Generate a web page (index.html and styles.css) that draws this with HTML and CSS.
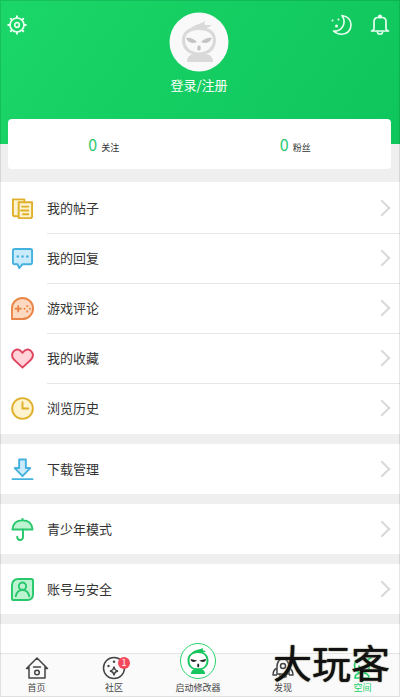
FILE: index.html
```html
<!DOCTYPE html>
<html lang="zh-CN">
<head>
<meta charset="utf-8">
<meta name="viewport" content="width=device-width, initial-scale=1">
<title>空间</title>
<link rel="stylesheet" href="styles.css">
</head>
<body>
<header class="hero">
  <div class="hero-bar">
    <button class="icon-btn" aria-label="设置">
      <svg width="20" height="20" viewBox="0 0 20 20" fill="none" stroke="currentColor" stroke-width="1.7" stroke-linecap="round"><circle cx="10" cy="10" r="7"/><circle cx="10" cy="10" r="2.3"/><path stroke-width="2" d="M10 1.2v1.3M10 17.5v1.3M1.2 10h1.3M17.5 10h1.3M3.8 3.8l.8.8M15.4 15.4l.8.8M3.8 16.2l.8-.8M15.4 4.6l.8-.8"/></svg>
    </button>
    <a class="profile" href="#login">
      <svg class="avatar" width="60" height="60" viewBox="0 0 60 60"><circle cx="30" cy="30" r="29.5" fill="#f9f9f9"/><g fill="#d9d9d9"><path d="M19 19C23 13 31 12 37 9C35 11 35 13 37 13L43 13C38 17 34 17 29 17C25 17 22 18 19 19Z"/><path fill-rule="evenodd" d="M30 15C41 15 47 20 47 28C47 37 41 43 30 43C19 43 13 37 13 28C13 20 19 15 30 15ZM30 18C21 18 16 22 16 28C16 35 22 40.500 30 40.500C38 40.500 44 35 44 28C44 22 39 18 30 18Z"/><path d="M18 50C18 45 21 42 25 42H36C41 42 44 45 44 50Z"/></g><g fill="#c4c4c4"><path d="M17 26C21 25 25 27 28 30C24 32 19 31 17 26ZM43 26C39 25 35 27 32 30C36 32 41 31 43 26Z"/><ellipse cx="30" cy="36" rx="1.800" ry="2.800"/></g></svg>
      <span>登录/注册</span>
    </a>
    <div class="hero-actions">
      <button class="icon-btn" aria-label="夜间模式">
        <svg width="22" height="22" viewBox="0 0 22 22" fill="none" stroke="currentColor" stroke-width="1.6" stroke-linejoin="round"><path d="M12 1.5C18 2.500 21 6 21 11C21 16.500 17 20.200 12 20.200C8 20.200 5 18.500 3.500 17C12 18 17 9 12 1.500Z"/><g fill="currentColor" stroke="none"><circle cx="2.500" cy="6.500" r="1"/><circle cx="8.500" cy="5.500" r="1"/><circle cx="6.500" cy="12" r="1.500"/></g></svg>
      </button>
      <button class="icon-btn" aria-label="通知">
        <svg width="20" height="22" viewBox="0 0 20 22" fill="none" stroke="currentColor" stroke-width="1.700" stroke-linecap="round" stroke-linejoin="round"><path d="M4 15V7.500C4 5 5.500 3.500 8 3.500H12C14.500 3.500 16 5 16 7.500V15M1.500 17H18.500M4 15L2 17M16 15L18 17M7.500 18.500C8 20.800 12 20.800 12.500 18.500"/><circle cx="10" cy="2.500" r="1.200" fill="currentColor"/></svg>
      </button>
    </div>
  </div>
</header>
<section class="stats">
  <a href="#following"><b>0</b><span>关注</span></a>
  <a href="#fans"><b>0</b><span>粉丝</span></a>
</section>
<main class="menu">
  <ul class="group group-multi">
    <li><a class="row" href="#posts"><svg class="ico yellow" viewBox="0 0 24 24"><path d="M2 2.500H14V20H4Q2 20 2 18Z"/><path d="M8 5.500H22V20Q22 22 20 22H8Z"/><path class="line" d="M11.500 10H18M10.500 14H18M12.500 18H18"/></svg><span>我的帖子</span></a></li>
    <li><a class="row" href="#replies"><svg class="ico blue" viewBox="0 0 24 24"><path d="M4 2H20Q22 2 22 4V16Q22 18 20 18H12L8.500 22L7 18H4Q2 18 2 16V4Q2 2 4 2Z"/><path class="line dots" d="M7 10H7.100M12 10H12.100M17 10H17.100"/></svg><span>我的回复</span></a></li>
    <li><a class="row" href="#reviews"><svg class="ico orange" viewBox="0 0 24 24"><path d="M1 23V12A11 11 0 1 1 12 23Z"/><path class="line" d="M7.500 9.500V15M4.800 12.200H10.200"/><g fill="#e98647" stroke="none"><circle cx="17" cy="9.500" r="1.100"/><circle cx="17" cy="15" r="1.100"/><circle cx="14.200" cy="12.200" r="1.100"/><circle cx="19.800" cy="12.200" r="1.100"/></g></svg><span>游戏评论</span></a></li>
    <li><a class="row" href="#favorites"><svg class="ico red" viewBox="0 0 24 24"><path d="M12 21.500L3 13C-2 7 5-.500 10 4L12 6L14 4C19-.500 26 7 21 13Z"/></svg><span>我的收藏</span></a></li>
    <li><a class="row" href="#history"><svg class="ico yellow" viewBox="0 0 24 24"><circle cx="12" cy="12" r="10.800"/><path class="line" d="M12 5.500V12H18"/></svg><span>浏览历史</span></a></li>
  </ul>
  <ul class="group"><li><a class="row" href="#downloads"><svg class="ico blue" viewBox="0 0 24 24"><path d="M8.500 1.500H15.500V10.500H20L12 19L4 10.500H8.500Z"/><path class="line" d="M1.500 22H22.500"/></svg><span>下载管理</span></a></li></ul>
  <ul class="group"><li><a class="row" href="#teen"><svg class="ico green" viewBox="0 0 24 24"><path d="M1.500 12C2 6 6 2.500 12 2.500S22 6 22.500 12Z"/><path class="line" d="M12 .800V2M12.500 12V20C12.500 24 6.500 24 6.500 19.500"/></svg><span>青少年模式</span></a></li></ul>
  <ul class="group"><li><a class="row" href="#account"><svg class="ico green" viewBox="0 0 24 24"><path d="M8 1H21Q23 1 23 3V17Q23 23 17 23H3Q1 23 1 21V8Q1 1 8 1Z"/><circle cx="12" cy="8.500" r="3.800"/><path class="line" d="M5 19C6 14 8.500 12.500 12 12.500S18 14 19 19"/></svg><span>账号与安全</span></a></li></ul>
  <div class="group rest"></div>
</main>
<nav class="tabs">
  <a href="#home"><svg width="24" height="24" viewBox="0 0 24 24" fill="none" stroke="currentColor" stroke-width="1.500" stroke-linecap="round" stroke-linejoin="round"><path d="M2 12L12 2L22 12M4 11V22H20V11M8.500 11H15.500M1.500 12.500H4M20 12.500H22.500"/><circle cx="12" cy="16.500" r="2.300"/></svg><span>首页</span></a>
  <a href="#community"><svg width="24" height="24" viewBox="0 0 24 24" fill="none" stroke="currentColor" stroke-width="1.500"><circle cx="12" cy="12" r="10.500"/><path d="M12 10.500Q12.500 14.500 16 15Q12.500 15.500 12 19.500Q11.500 15.500 8 15Q11.500 14.500 12 10.500Z"/><g fill="currentColor" stroke="none"><circle cx="6.500" cy="10" r="1.200"/><circle cx="12" cy="5.800" r="1.200"/></g></svg><i class="badge">1</i><span>社区</span></a>
  <a class="launch" href="#launch"><svg width="38" height="38" viewBox="0 0 38 38"><circle cx="19" cy="19" r="17.500" fill="#fff" stroke="#27d36b"/><g fill="#18c65f"><path d="M12 12C14 8 19 8 24 6C23 8 24 9 27 9C25 11 22 11 19 11C16 11 14 11 12 12Z"/><path fill-rule="evenodd" d="M19 9.500C26 9.500 29.500 13 29.500 18.500S26 28 19 28S8.500 24 8.500 18.500S12 9.500 19 9.500ZM19 11C13 11 10.500 14 10.500 18.500S13 26.500 19 26.500S27.500 23 27.500 18.500S25 11 19 11Z"/><path d="M12 32C12 28 15 26.500 19 26.500S26 28 26 32Z"/></g><g fill="#202422"><path d="M11.500 17L18 18.500C15 21 12 20 11.500 17ZM27 17L20.500 18.500C23 21 27 20 27 17Z"/><ellipse cx="19.200" cy="23.500" rx="1" ry="1.900"/></g></svg><span>启动修改器</span></a>
  <a href="#discover"><svg width="24" height="24" viewBox="0 0 24 24" fill="none" stroke="currentColor" stroke-width="1.500" stroke-linejoin="round"><path d="M6 18V11C6 6 9 3 12 2C15 3 18 6 18 11V18ZM6 12Q2 14 2 19H6M18 12Q22 14 22 19H18M9 18V21H15V18"/><circle cx="12" cy="10" r="2.500"/></svg><i class="badge dot"></i><span>发现</span></a>
  <a class="active" href="#space" aria-current="page"><svg width="24" height="24" viewBox="0 0 24 24" fill="none" stroke="currentColor" stroke-width="1.700" stroke-linecap="round"><circle cx="11" cy="9.500" r="7.500"/><path d="M8 10C9 13 13 13 14 10M4 22C4 18 7 17 11 17S18 18 18 22ZM16 4L20 2"/></svg><span>空间</span></a>
  <strong class="mark">大玩客</strong>
</nav>
</body>
</html>
```
FILE: styles.css
```css
* { box-sizing: border-box; }
body {
  margin: 0;
  min-height: 100vh;
  display: flex;
  flex-direction: column;
  background: #efefef;
  color: #333;
  font-family: "Noto Sans CJK SC", sans-serif;
  font-size: 13px;
}
body::after {
  content: "";
  position: fixed;
  inset: 0;
  border: 1px solid rgba(0, 0, 0, .1);
  pointer-events: none;
  z-index: 5;
}
a { color: inherit; text-decoration: none; }
ul { list-style: none; margin: 0; padding: 0; }
svg { display: block; flex: none; }

.hero {
  padding: 12px 10px 48px 8px;
  background: linear-gradient(125deg, #1bd669, #0ec55b);
  color: #fff;
}
.hero-bar {
  display: grid;
  grid-template-columns: 1fr auto 1fr;
  align-items: start;
}
.icon-btn {
  padding: 0;
  border: 0;
  background: none;
  color: #e9fff1;
  justify-self: start;
}
.hero-bar > .icon-btn { margin: 3px 0 0 -1px; }
.hero-actions {
  display: flex;
  justify-content: flex-end;
  gap: 18px;
  margin-top: 2px;
}
.profile {
  display: flex;
  flex-direction: column;
  align-items: center;
  gap: 2px;
  line-height: 22px;
}

.stats {
  display: grid;
  grid-template-columns: 1fr 1fr;
  height: 50px;
  margin: -25px 9px 13px 8px;
  background: #fff;
  border-radius: 4px;
}
.stats a {
  display: flex;
  align-items: center;
  justify-content: center;
  gap: 4px;
}
.stats b { padding-bottom: 1px; color: #2cc970; font-size: 16px; font-weight: 400; }
.stats span { padding-top: 6px; font-size: 9px; }

.menu {
  flex: 1;
  display: flex;
  flex-direction: column;
  gap: 10px;
}
.group { background: #fff; }
.group-multi { padding: 1px 0; }
.row {
  display: flex;
  align-items: center;
  gap: 13px;
  height: 50px;
  padding: 0 12px 0 11px;
}
.row span { padding-bottom: 2px; }
.row::after {
  content: "";
  width: 10px;
  height: 10px;
  margin-left: auto;
  border: solid #d9d9d9;
  border-width: 2px 2px 0 0;
  transform: rotate(45deg);
}
.group li + li {
  background: linear-gradient(#e6e6e6, #e6e6e6) 47px 0 / 100% 1px no-repeat;
}
.rest { flex: 1; min-height: 29px; }
.ico {
  width: 23px;
  height: 23px;
  stroke-width: 2;
  stroke-linecap: round;
  stroke-linejoin: round;
}
.ico .line { fill: none; }
.ico .dots { stroke-width: 2.6; }
.yellow { stroke: #e0b02c; fill: #fdf3cf; }
.blue { stroke: #45b1de; fill: #c9ebfb; }
.orange { stroke: #e98647; fill: #fcd9c0; }
.red { stroke: #e04560; fill: #ffd3d8; }
.green { stroke: #27c86c; fill: #bdf3d1; }

.tabs {
  position: sticky;
  bottom: 0;
  display: grid;
  grid-template-columns: 73fr 82fr 86fr 84fr 75fr;
  grid-template-rows: 100%;
  height: 44px;
  border-top: 1px solid #e4e4e4;
  background: #fafafa;
  font-size: 9px;
  line-height: 14px;
  color: #444;
}
.tabs a {
  position: relative;
  display: flex;
  flex-direction: column;
  align-items: center;
  justify-content: flex-end;
  padding-bottom: 2px;
}
.tabs svg { margin-bottom: 1px; }
.tabs .active { color: #20cf69; }
.badge {
  position: absolute;
  top: 3px;
  left: 50%;
  width: 12px;
  height: 12px;
  margin-left: 4px;
  border-radius: 50%;
  background: #f5485a;
  color: #fff;
  font-size: 9px;
  font-style: normal;
  line-height: 12px;
  text-align: center;
}
.badge.dot { width: 5px; height: 5px; margin-left: 6px; }
.mark {
  position: absolute;
  right: 10px;
  bottom: 16px;
  color: #111;
  font-size: 39px;
  font-weight: 400;
  line-height: 40px;
  text-shadow: 0 0 1px #111, 0 0 2px #c9bf9f;
  pointer-events: none;
}
```
